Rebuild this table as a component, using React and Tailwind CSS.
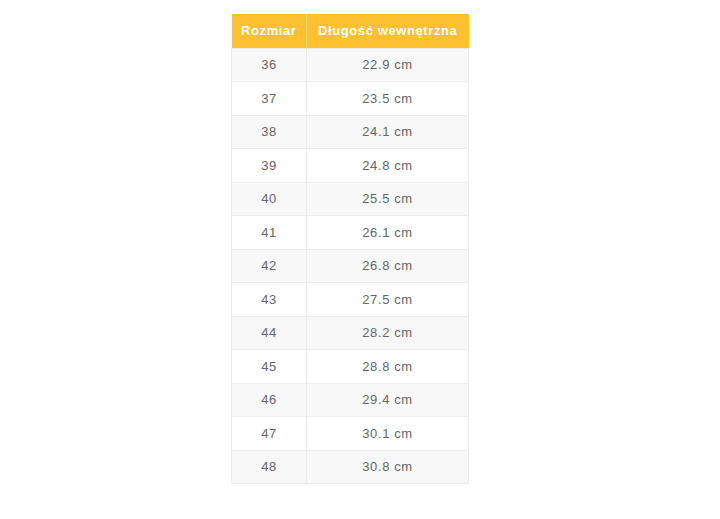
import React from "react";

const rows = [
  ["36", "22.9 cm"],
  ["37", "23.5 cm"],
  ["38", "24.1 cm"],
  ["39", "24.8 cm"],
  ["40", "25.5 cm"],
  ["41", "26.1 cm"],
  ["42", "26.8 cm"],
  ["43", "27.5 cm"],
  ["44", "28.2 cm"],
  ["45", "28.8 cm"],
  ["46", "29.4 cm"],
  ["47", "30.1 cm"],
  ["48", "30.8 cm"],
];

export default function App() {
  return (
    <div className="w-[720px] h-[519px] bg-white pt-[14px] pl-[231px] font-['Liberation_Sans',Arial,sans-serif]">
      <table className="w-[238px] border-collapse text-[13px] tracking-[0.6px]">
        <thead>
          <tr className="bg-[#fdc02f] text-white h-[34px]">
            <th className="w-[75px] font-bold border-r border-[#f3d27d]">Rozmiar</th>
            <th className="font-bold">Długość wewnętrzna</th>
          </tr>
        </thead>
        <tbody>
          {rows.map(([size, len], i) => (
            <tr key={size} className={i % 2 === 0 ? "bg-[#f8f8f8] h-[33.5px]" : "bg-white h-[33.5px]"}>
              <td className="border border-[#ececec] text-center text-[#666]">{size}</td>
              <td className="border border-[#ececec] text-center text-[#666]">{len}</td>
            </tr>
          ))}
        </tbody>
      </table>
    </div>
  );
}
